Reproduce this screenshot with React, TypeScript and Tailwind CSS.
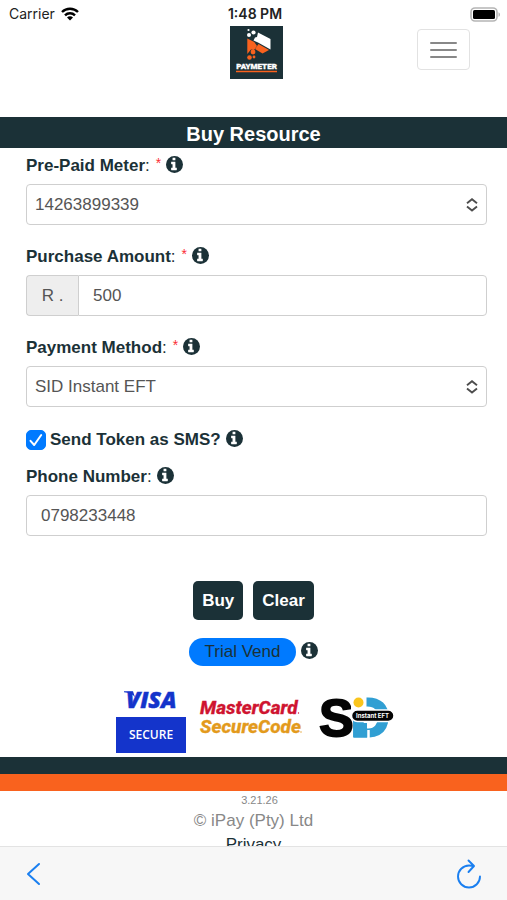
import type { ReactNode } from "react";

const controlClass = "block w-full h-[41px] rounded border border-[#cfcfcf] bg-white text-[17px] text-[#555555] outline-none";

function Info() {
  return <button type="button" aria-label="More information" className="ml-[5px] pb-1 text-[#1b3137]">
    <svg viewBox="128 128 1536 1536" className="h-[17px] w-[17px]" aria-hidden>
      <circle cx="896" cy="896" r="768" fill="currentColor" />
      <path fill="#fff" d="M1024 1376v-160q0-14-9-23t-23-9h-96V672q0-14-9-23t-23-9H544q-14 0-23 9t-9 23v160q0 14 9 23t23 9h96v320h-96q-14 0-23 9t-9 23v160q0 14 9 23t23 9h448q14 0 23-9t9-23zM896 480V320q0-14-9-23t-23-9H672q-14 0-23 9t-9 23v160q0 14 9 23t23 9h192q14 0 23-9t9-23z" transform="translate(80)" />
    </svg>
  </button>;
}

function FieldLabel({ htmlFor, required, children }: { htmlFor: string; required?: boolean; children: ReactNode }) {
  return <div className="flex h-9 items-center">
    <label htmlFor={htmlFor} className="font-bold">
      {children}<span className="font-normal">:</span>
      {required && <span className="ml-1.5 align-top text-sm font-normal text-red-500">*</span>}
    </label>
    <Info />
  </div>;
}

function Select({ id, value }: { id: string; value: string }) {
  return <div className="relative">
    <select id={id} defaultValue={value} className={`${controlClass} appearance-none px-2`}>
      <option>{value}</option>
    </select>
    <svg viewBox="0 0 12 14" className="pointer-events-none absolute right-[9px] top-[14px] h-[14px] w-3" fill="none" stroke="#4d4d4d" strokeWidth="1.9" aria-hidden>
      <path d="M1 5.2 6 1.2l5 4M1 8.6l5 4 5-4" />
    </svg>
  </div>;
}

function StatusBar() {
  return <div className="grid h-[26px] grid-cols-3 items-center pl-[9px] pr-1.5 pt-0.5 font-[Inter,sans-serif] text-sm text-[#222222]">
    <div className="flex items-center gap-1.5">
      Carrier
      <svg viewBox="0 0 18 14" className="h-[14px] w-[18px]" fill="none" stroke="#000" strokeWidth="2.4" aria-hidden>
        <path d="M1 5a11.4 11.4 0 0 1 16 0M4 8.3a7.1 7.1 0 0 1 10 0" />
        <path d="m9 13.6 3-3a4.2 4.2 0 0 0-6 0Z" fill="#000" stroke="none" />
      </svg>
    </div>
    <div className="text-center font-semibold">1:48 PM</div>
    <svg viewBox="0 0 31 15" className="h-[15px] w-[31px] justify-self-end" aria-hidden>
      <rect x="1" y="1" width="26" height="13" rx="4" fill="#fff" stroke="#b5b5b5" strokeWidth="1.6" />
      <rect x="3" y="3" width="22" height="9" rx="1.5" fill="#000" />
      <path d="M28.5 5.2c2 .8 2 3.8 0 4.6Z" fill="#b5b5b5" />
    </svg>
  </div>;
}

function PaymeterLogo() {
  return <svg viewBox="0 0 53 53" className="h-[53px] w-[53px]" role="img" aria-label="Paymeter">
    <rect width="53" height="53" fill="#1b3137" />
    <g fill="#fff">
      <path d="M28 6.500 40.500 13v10.500L28 16.500l-4.500-2 1.500-3 2-.5Z" />
      <circle cx="19" cy="9" r="2" />
      <circle cx="23.500" cy="6.500" r="2.100" />
      <circle cx="18.500" cy="4" r="1.100" />
    </g>
    <g fill="#f9621e">
      <path d="m17.300 12.500 7 3.500 2.700 4-3 4-3-.5-3.700 4.500Z" />
      <path d="m28.500 18 10.500 6-6.500 3.500-7.500-4.500Z" />
      <circle cx="23" cy="26" r="2.400" />
      <circle cx="19.500" cy="31.500" r="2.300" />
      <circle cx="24" cy="31" r="1.400" />
      <path d="M6 44.800h41v1.500H6Z" />
    </g>
    <text x="26.500" y="43" textAnchor="middle" fill="#fff" stroke="#fff" strokeWidth="0.300" fontFamily="Roboto, sans-serif" fontWeight="900" fontSize="8">PAYMETER</text>
  </svg>;
}

function VisaSecure() {
  return <svg viewBox="0 0 70 63" className="h-[63px] w-[70px] overflow-visible" role="img" aria-label="Visa Secure">
    <text x="10" y="18" fill="#1434cb" stroke="#1434cb" strokeWidth="0.500" fontFamily="Open Sans, sans-serif" fontWeight="800" fontStyle="italic" fontSize="23">VISA</text>
    <path d="M8 1.200h9l2 6c-2-3-6-4.500-11-5Z" fill="#1434cb" />
    <rect y="27" width="70" height="36" fill="#1434cb" />
    <text x="35" y="49" textAnchor="middle" fill="#fff" fontFamily="Open Sans, sans-serif" fontWeight="600" fontSize="12">SECURE</text>
  </svg>;
}

function MasterCardSecureCode() {
  return <svg viewBox="0 0 100 42" className="h-[42px] w-[100px] overflow-visible" role="img" aria-label="MasterCard SecureCode">
    <g fontFamily="Roboto, sans-serif" fontWeight="800" fontStyle="italic" fontSize="19">
      <text x="0" y="17" fill="#cf1430" stroke="#cf1430" strokeWidth="0.300">MasterCard</text>
      <text x="0" y="36" fill="#e39a1c" stroke="#e39a1c" strokeWidth="0.300">SecureCode</text>
    </g>
    <circle cx="98.500" cy="16" r="0.700" fill="#cf1430" />
    <circle cx="101" cy="35" r="0.700" fill="#e39a1c" />
  </svg>;
}

function SidLogo() {
  return <svg viewBox="0 0 75 42" className="h-[42px] w-[75px] overflow-visible" role="img" aria-label="SID Instant EFT">
    <g fontFamily="Liberation Sans, Arial, sans-serif" fontWeight="700">
      <text x="-1" y="39" fill="#050505" stroke="#050505" strokeWidth="1.800" fontSize="52">S</text>
      <text x="31" y="39" fill="#319fd3" stroke="#319fd3" strokeWidth="3" fontSize="53">D</text>
    </g>
    <path d="M31 0h15.500v14H31Z" fill="#fff" />
    <path d="M34 26h13v14.500H34Z" fill="#319fd3" />
    <path d="M48.500 33v9" stroke="#fff" strokeWidth="2.500" />
    <circle cx="38.500" cy="5.500" r="5" fill="#fac51c" />
    <rect x="31.500" y="13" width="42.500" height="11.500" rx="5.700" fill="#050505" stroke="#fff" strokeWidth="1.500" />
    <text x="52.500" y="21" textAnchor="middle" fill="#fff" fontFamily="Inter, sans-serif" fontWeight="700" fontSize="6">Instant EFT</text>
  </svg>;
}

export default function App() {
  return <div className="flex h-screen flex-col overflow-hidden bg-white font-['Liberation_Sans',Arial,sans-serif] text-[17px] text-[#1b3137]">
    <StatusBar />
    <main className="min-h-0 flex-1 overflow-hidden">
      <header className="grid h-[91px] grid-cols-3 items-start pl-[43px] pr-[37px]">
        <a href="#home" className="col-start-2 justify-self-center"><PaymeterLogo /></a>
        <button type="button" aria-label="Menu" className="mt-[3px] flex h-[41px] w-[53px] flex-col items-center justify-center gap-[5px] justify-self-end rounded border border-[#e2e2e2]">
          <span className="h-0.5 w-[27px] rounded-full bg-[#888888]" />
          <span className="h-0.5 w-[27px] rounded-full bg-[#888888]" />
          <span className="h-0.5 w-[27px] rounded-full bg-[#888888]" />
        </button>
      </header>
      <h1 className="flex h-[31px] items-center justify-center bg-[#1b3137] pt-0.5 text-xl font-bold text-white">Buy Resource</h1>

      <form onSubmit={(e) => e.preventDefault()}>
        <div className="pl-[26px] pr-5">
          <div className="mb-3.5">
            <FieldLabel htmlFor="meter" required>Pre-Paid Meter</FieldLabel>
            <Select id="meter" value="14263899339" />
          </div>
          <div className="mb-3.5">
            <FieldLabel htmlFor="amount" required>Purchase Amount</FieldLabel>
            <div className="flex">
              <span className="flex h-[41px] w-[52px] shrink-0 items-center justify-center rounded-l border border-r-0 border-[#cfcfcf] bg-[#eeeeee] text-[#555555]">R .</span>
              <input id="amount" defaultValue="500" className={`${controlClass} rounded-l-none px-3.5`} />
            </div>
          </div>
          <div className="mb-3.5">
            <FieldLabel htmlFor="method" required>Payment Method</FieldLabel>
            <Select id="method" value="SID Instant EFT" />
          </div>
          <div className="flex h-[38px] items-center">
            <span className="relative mr-1 h-5 w-5">
              <input id="sms" type="checkbox" defaultChecked className="peer block h-5 w-5 appearance-none rounded-[5px] border border-[#b5b5b5] checked:border-[#007aff] checked:bg-[#007aff]" />
              <svg viewBox="0 0 20 20" className="pointer-events-none invisible absolute inset-0 peer-checked:visible" fill="none" stroke="#fff" strokeWidth="2" strokeLinecap="round" strokeLinejoin="round" aria-hidden>
                <path d="m4.500 10.800 3.700 4.200 7-10" />
              </svg>
            </span>
            <label htmlFor="sms" className="font-bold">Send Token as SMS?</label>
            <Info />
          </div>
          <FieldLabel htmlFor="phone">Phone Number</FieldLabel>
          <input id="phone" type="tel" defaultValue="0798233448" className={`${controlClass} px-3.5`} />
        </div>

        <div className="mt-[45px] flex justify-center gap-2.5 font-bold text-white">
          <button type="submit" className="h-[39px] rounded-[5px] bg-[#1b3137] px-[9px]">Buy</button>
          <button type="reset" className="h-[39px] rounded-[5px] bg-[#1b3137] px-[9px]">Clear</button>
        </div>
        <div className="mt-[18px] flex h-7 items-center justify-center">
          <button type="button" className="h-7 rounded-full bg-[#007aff] px-4">Trial Vend</button>
          <Info />
        </div>
      </form>

      <div className="mt-6 flex h-[67px] items-start justify-center gap-3.5 pl-1">
        <VisaSecure />
        <div className="pt-[7px]"><MasterCardSecureCode /></div>
        <div className="pl-1.5 pt-[7px]"><SidLogo /></div>
      </div>
      <div className="h-[17px] bg-[#1b3137]" />
      <div className="h-[17px] bg-[#f9621e]" />
      <footer className="text-center leading-6 text-[#888888]">
        <div className="pl-3 text-[11px] leading-[18px]">3.21.26</div>
        <div>© iPay (Pty) Ltd</div>
        <a href="#privacy" className="text-[#1b3137]">Privacy</a>
      </footer>
    </main>

    <nav className="flex h-[54px] shrink-0 items-center justify-between border-t border-[#e3e3e3] bg-[#f7f7f7] px-[25px] text-[#1a7ff0]">
      <button type="button" aria-label="Back">
        <svg viewBox="0 0 16 24" className="h-6 w-4" fill="none" stroke="currentColor" strokeWidth="2" strokeLinecap="round" strokeLinejoin="round" aria-hidden>
          <path d="M14 2 3 12l11 10" />
        </svg>
      </button>
      <button type="button" aria-label="Reload">
        <svg viewBox="0 0 26 30" className="h-[30px] w-[26px]" fill="none" stroke="currentColor" strokeWidth="1.900" strokeLinecap="round" strokeLinejoin="round" aria-hidden>
          <path d="M24 17.500A11 11 0 1 1 13 6.500c1.800 0 3.200.200 4.800.800M12.500 1.500l5.500 5.500-5.500 6" />
        </svg>
      </button>
    </nav>
  </div>;
}
